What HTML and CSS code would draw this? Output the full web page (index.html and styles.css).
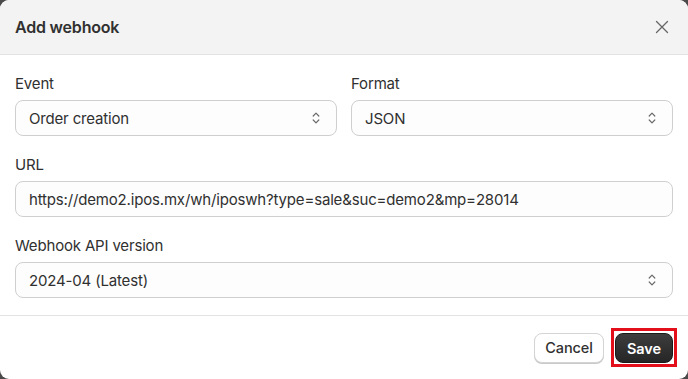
FILE: index.html
```html
<!DOCTYPE html>
<html>
<head>
    <title>Add webhook</title>
    <link rel="stylesheet" href="styles.css">
</head>
<body>
    <div class="modal">
        <div class="modal-header">
            <h1>Add webhook</h1>
            <button type="button" class="close-btn" aria-label="Close">
                <svg width="14" height="14" viewBox="0 0 14 14">
                    <path d="M1.5 1.5 L12.5 12.5 M12.5 1.5 L1.5 12.5" stroke="#666" stroke-width="1.3" stroke-linecap="round" fill="none"/>
                </svg>
            </button>
        </div>

        <form class="modal-body">
            <div class="row">
                <div class="field">
                    <label class="field-label" for="event">Event</label>
                    <div class="select">
                        <span>Order creation</span>
                        <svg class="chevrons" width="10" height="14" viewBox="0 0 10 14">
                            <path d="M2.2 5 L5 2.2 L7.8 5 M2.2 9 L5 11.8 L7.8 9" stroke="#6b6b6b" stroke-width="1.2" stroke-linecap="round" stroke-linejoin="round" fill="none"/>
                        </svg>
                    </div>
                </div>
                <div class="field">
                    <label class="field-label" for="format">Format</label>
                    <div class="select">
                        <span>JSON</span>
                        <svg class="chevrons" width="10" height="14" viewBox="0 0 10 14">
                            <path d="M2.2 5 L5 2.2 L7.8 5 M2.2 9 L5 11.8 L7.8 9" stroke="#6b6b6b" stroke-width="1.2" stroke-linecap="round" stroke-linejoin="round" fill="none"/>
                        </svg>
                    </div>
                </div>
            </div>

            <div class="field">
                <label class="field-label" for="url">URL</label>
                <div class="select">
                    <span>https://demo2.ipos.mx/wh/iposwh?type=sale&amp;suc=demo2&amp;mp=28014</span>
                </div>
            </div>

            <div class="field">
                <label class="field-label" for="version">Webhook API version</label>
                <div class="select">
                    <span>2024-04 (Latest)</span>
                    <svg class="chevrons" width="10" height="14" viewBox="0 0 10 14">
                        <path d="M2.2 5 L5 2.2 L7.8 5 M2.2 9 L5 11.8 L7.8 9" stroke="#6b6b6b" stroke-width="1.2" stroke-linecap="round" stroke-linejoin="round" fill="none"/>
                    </svg>
                </div>
            </div>
        </form>

        <div class="modal-footer">
            <button type="button" class="btn btn-cancel">Cancel</button>
            <span class="highlight">
                <button type="button" class="btn btn-save">Save</button>
            </span>
        </div>
    </div>
</body>
</html>
```

FILE: styles.css
```css
html {
    background-color: #4a4a4a;
}

body {
    margin: 0;
    font-family: Inter, 'Noto Sans', sans-serif;
    color: #303030;
}

.modal {
    width: 688px;
    height: 379px;
    background-color: #fff;
    border-radius: 9px;
    overflow: hidden;
    display: flex;
    flex-direction: column;
}

.modal-header {
    height: 54px;
    background-color: #f3f3f3;
    border-bottom: 1px solid #e3e3e3;
    display: flex;
    align-items: center;
    justify-content: space-between;
    padding: 0 19px 0 15px;
}

.modal-header h1 {
    margin: 0;
    font-size: 16px;
    font-weight: 600;
    letter-spacing: -0.2px;
    color: #303030;
}

.close-btn {
    border: none;
    background: none;
    padding: 0;
    display: flex;
}

.modal-body {
    padding: 19px 15px 17px;
    display: flex;
    flex-direction: column;
    gap: 19px;
    border-bottom: 1px solid #e3e3e3;
}

.row {
    display: flex;
    gap: 14px;
}

.row .field {
    flex: 1;
}

.field {
    display: flex;
    flex-direction: column;
    gap: 6px;
}

.field-label {
    font-size: 15px;
    line-height: 20px;
    letter-spacing: -0.17px;
    color: #303030;
}

.select {
    height: 36px;
    box-sizing: border-box;
    border: 1px solid #cfcfcf;
    border-radius: 8px;
    background-color: #fdfdfd;
    display: flex;
    align-items: center;
    justify-content: space-between;
    padding: 0 13px;
    font-size: 15px;
    letter-spacing: -0.17px;
    color: #303030;
}

.chevrons {
    margin-right: 2px;
}

.modal-footer {
    flex: 1;
    display: flex;
    align-items: center;
    justify-content: flex-end;
    gap: 7px;
    padding: 0 11px 0 15px;
}

.btn {
    height: 30px;
    border-radius: 8px;
    font-family: Inter, 'Noto Sans', sans-serif;
    font-size: 14.5px;
    letter-spacing: -0.1px;
    cursor: pointer;
}

.btn-cancel {
    width: 70px;
    background-color: #fff;
    color: #303030;
    font-weight: 500;
    border: 1px solid #d4d4d4;
    box-shadow: 0 1px 0 #c9c9c9;
}

.highlight {
    display: flex;
    border: 3px solid #e3101c;
    padding: 2px 1px 1px;
}

.btn-save {
    width: 58px;
    background: linear-gradient(#3d3d3d, #262626);
    color: #fff;
    font-weight: 600;
    border: 1px solid #1a1a1a;
    padding: 0;
}
```
